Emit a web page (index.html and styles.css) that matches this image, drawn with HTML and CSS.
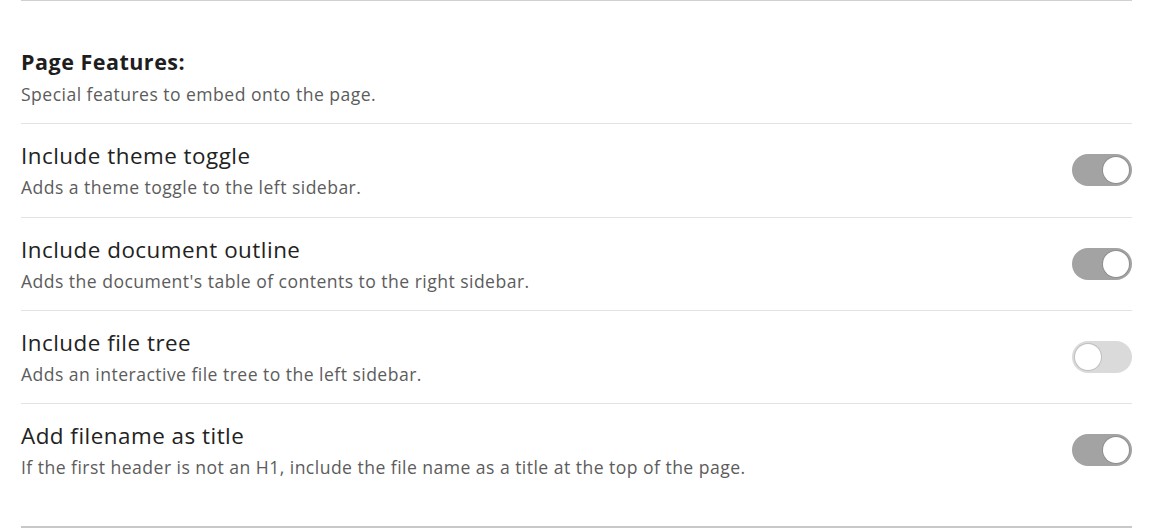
FILE: index.html
```html
<!DOCTYPE html>
<html>
<head>
<meta charset="utf-8">
<link rel="stylesheet" href="styles.css">
</head>
<body>
<div class="settings">
  <div class="section-head">
    <div class="section-title">Page Features:</div>
    <div class="section-desc">Special features to embed onto the page.</div>
  </div>
  <div class="item first">
    <div class="info">
      <div class="item-name">Include theme toggle</div>
      <div class="item-desc">Adds a theme toggle to the left sidebar.</div>
    </div>
    <div class="toggle on"><div class="knob"></div></div>
  </div>
  <div class="item">
    <div class="info">
      <div class="item-name">Include document outline</div>
      <div class="item-desc">Adds the document's table of contents to the right sidebar.</div>
    </div>
    <div class="toggle on"><div class="knob"></div></div>
  </div>
  <div class="item">
    <div class="info">
      <div class="item-name">Include file tree</div>
      <div class="item-desc">Adds an interactive file tree to the left sidebar.</div>
    </div>
    <div class="toggle off"><div class="knob"></div></div>
  </div>
  <div class="item last">
    <div class="info">
      <div class="item-name">Add filename as title</div>
      <div class="item-desc">If the first header is not an H1, include the file name as a title at the top of the page.</div>
    </div>
    <div class="toggle on"><div class="knob"></div></div>
  </div>
</div>
</body>
</html>
```
FILE: styles.css
```css
html, body {
  margin: 0;
  padding: 0;
  background: #ffffff;
}
body {
  font-family: "Open Sans", "Noto Sans", sans-serif;
  color: #222222;
}
.settings {
  margin-left: 21px;
  width: 1111px;
  border-top: 1px solid #d0d0d0;
  border-bottom: 2px solid #c8c8c8;
}
.section-head {
  padding-top: 47px;
  padding-bottom: 17px;
}
.section-title {
  font-size: 21.5px;
  font-weight: 700;
  line-height: 28px;
  letter-spacing: 0.5px;
  color: #1e1e1e;
}
.section-desc {
  font-size: 17.6px;
  line-height: 24px;
  letter-spacing: 0.45px;
  color: #5c5c5c;
  margin-top: 6px;
}
.item {
  display: flex;
  align-items: center;
  justify-content: space-between;
  border-top: 1px solid #e3e3e3;
  padding: 17px 0 17px;
}
.item.first {
  padding-bottom: 18px;
}
.item.last {
  padding-bottom: 47px;
}
.item-name {
  font-size: 22.4px;
  line-height: 30px;
  letter-spacing: 0.5px;
  color: #222222;
}
.item-desc {
  font-size: 17.6px;
  line-height: 24px;
  letter-spacing: 0.45px;
  color: #5c5c5c;
  margin-top: 4px;
}
.toggle {
  position: relative;
  width: 60px;
  height: 32px;
  border-radius: 16px;
  flex-shrink: 0;
}
.toggle.on {
  background: #a3a3a3;
}
.toggle.off {
  background: #dadada;
}
.knob {
  position: absolute;
  top: 3px;
  width: 26px;
  height: 26px;
  border-radius: 50%;
  background: #ffffff;
  box-shadow: 0 0 0 1px rgba(0, 0, 0, 0.12);
}
.toggle.on .knob {
  right: 3px;
}
.toggle.off .knob {
  left: 3px;
}
```
